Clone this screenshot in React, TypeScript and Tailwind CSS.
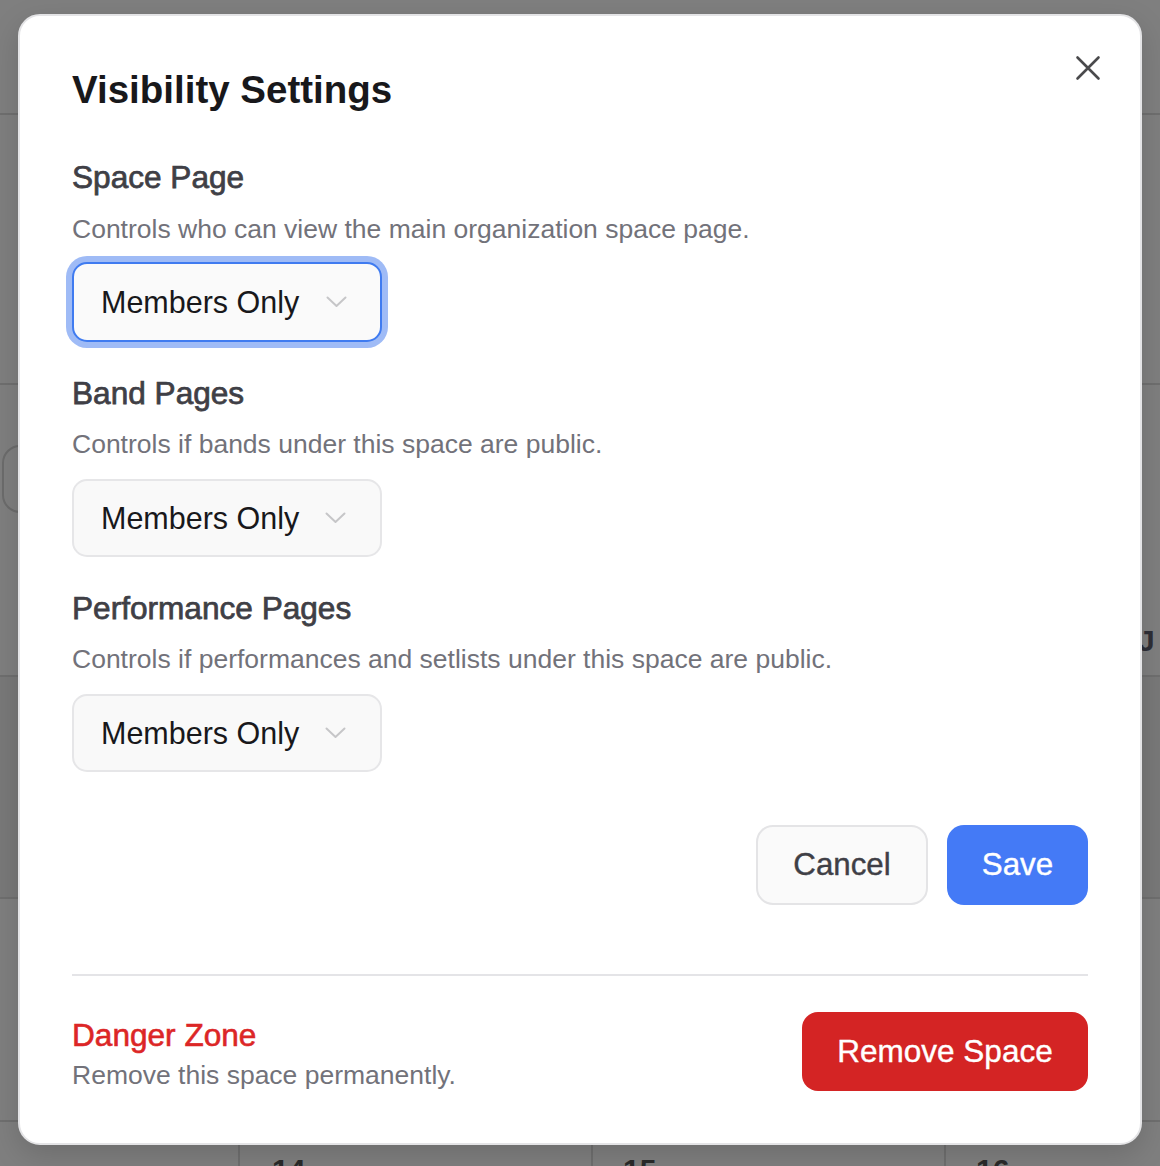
import React from "react";

function Chevron() {
  return (
    <svg width="21" height="12" viewBox="0 0 21 12" fill="none" className="shrink-0">
      <path d="M1.5 1.5 L10.5 10 L19.5 1.5" stroke="#c6c6c8" strokeWidth="2" strokeLinecap="round" strokeLinejoin="round" />
    </svg>
  );
}

function SelectBox({ focused }: { focused?: boolean }) {
  return (
    <div
      className={
        focused
          ? "w-[310px] h-[80px] rounded-[15px] border-2 border-[#3f7bf0] ring-[6px] ring-[#9fbbf6] bg-[#fafafa] flex items-center pl-[27px] pr-[33px] justify-between"
          : "w-[310px] h-[78px] rounded-[15px] border-2 border-[#e6e6e8] bg-[#f9f9f9] flex items-center pl-[27px] pr-[34px] justify-between"
      }
    >
      <span className="text-[30.5px] leading-[36px] text-[#18181b]">Members Only</span>
      <Chevron />
    </div>
  );
}

function Section({ title, desc, focused, first }: { title: string; desc: string; focused?: boolean; first?: boolean }) {
  return (
    <div className={first ? "flex flex-col mt-[46px]" : "flex flex-col mt-[33px]"}>
      <div className="text-[31.6px] leading-[36px] font-normal [-webkit-text-stroke:0.75px] text-[#3f3f46]">{title}</div>
      <div className={first ? "text-[26.5px] leading-[32px] text-[#72727a] mt-[18px]" : "text-[26.5px] leading-[32px] text-[#72727a] mt-[17px]"}>{desc}</div>
      <div className={focused ? "mt-[17px]" : "mt-[19px]"}>
        <SelectBox focused={focused} />
      </div>
    </div>
  );
}

export default function App() {
  const rows = [115, 270, 292, 222, 223];
  return (
    <div className="relative w-[1160px] h-[1166px] overflow-hidden bg-[#7f7f7f]" style={{ fontFamily: '"Liberation Sans", Arial, Helvetica, sans-serif' }}>
      {/* background calendar grid */}
      <div className="flex flex-col">
        {rows.map((h, i) => (
          <div
            key={i}
            className={i === 3 ? "border-b-2 border-[#6f6f6f] bg-[#797979]" : "border-b-2 border-[#6f6f6f]"}
            style={{ height: h }}
          />
        ))}
        <div className="flex h-[44px]">
          <div className="w-[240px] border-r-2 border-[#6f6f6f]" />
          <div className="w-[353px] border-r-2 border-[#6f6f6f] pl-[32px] pt-[30px] text-[30px] font-bold text-[#2a2a2a] leading-[36px]">14</div>
          <div className="w-[353px] border-r-2 border-[#6f6f6f] pl-[30px] pt-[30px] text-[30px] font-bold text-[#2a2a2a] leading-[36px]">15</div>
          <div className="flex-1 pl-[30px] pt-[30px] text-[30px] font-bold text-[#2a2a2a] leading-[36px]">16</div>
        </div>
      </div>
      {/* partially hidden background items */}
      <div className="absolute left-[2px] top-[445px] w-[60px] h-[68px] rounded-[18px] border-2 border-[#6c6c6c]" />
      <div className="absolute left-[1138px] top-[626px] text-[30px] font-bold text-[#2e2e36] leading-[30px]">J</div>

      {/* modal */}
      <div className="absolute left-[18px] top-[14px] w-[1124px] h-[1131px] rounded-[22px] bg-white border-2 border-[#e4e4e6] shadow-[0_10px_30px_rgba(0,0,0,0.15)] px-[52px] pt-[51px] flex flex-col">
        <button className="absolute right-[37px] top-[37px] w-[30px] h-[30px] flex items-center justify-center">
          <svg width="26" height="26" viewBox="0 0 26 26" fill="none">
            <path d="M2.5 2.5 L23.5 23.5 M23.5 2.5 L2.5 23.5" stroke="#4a4a4c" strokeWidth="2.6" strokeLinecap="round" />
          </svg>
        </button>
        <div className="text-[38.5px] leading-[46px] font-bold text-[#18181b]">Visibility Settings</div>
        <Section first focused title="Space Page" desc="Controls who can view the main organization space page." />
        <Section title="Band Pages" desc="Controls if bands under this space are public." />
        <Section title="Performance Pages" desc="Controls if performances and setlists under this space are public." />

        <div className="flex justify-end gap-[19px] mt-[53px]">
          <button className="w-[172px] h-[80px] rounded-[17px] border-2 border-[#e4e4e6] bg-[#fafafa] text-[31.3px] [-webkit-text-stroke:0.4px] text-[#3f3f46]">Cancel</button>
          <button className="w-[141px] h-[80px] rounded-[17px] bg-[#447af6] text-[31.3px] [-webkit-text-stroke:0.4px] text-white">Save</button>
        </div>

        <div className="mt-[69px] h-[2px] bg-[#e4e4e7]" />

        <div className="flex items-start justify-between mt-[36px]">
          <div className="flex flex-col mt-[5px]">
            <div className="text-[31.6px] leading-[36px] [-webkit-text-stroke:0.6px] text-[#dc2626]">Danger Zone</div>
            <div className="text-[26.5px] leading-[32px] text-[#72727a] mt-[6px]">Remove this space permanently.</div>
          </div>
          <button className="w-[286px] h-[79px] rounded-[16px] bg-[#d42424] text-[31.5px] [-webkit-text-stroke:0.4px] text-white">Remove Space</button>
        </div>
      </div>
    </div>
  );
}
